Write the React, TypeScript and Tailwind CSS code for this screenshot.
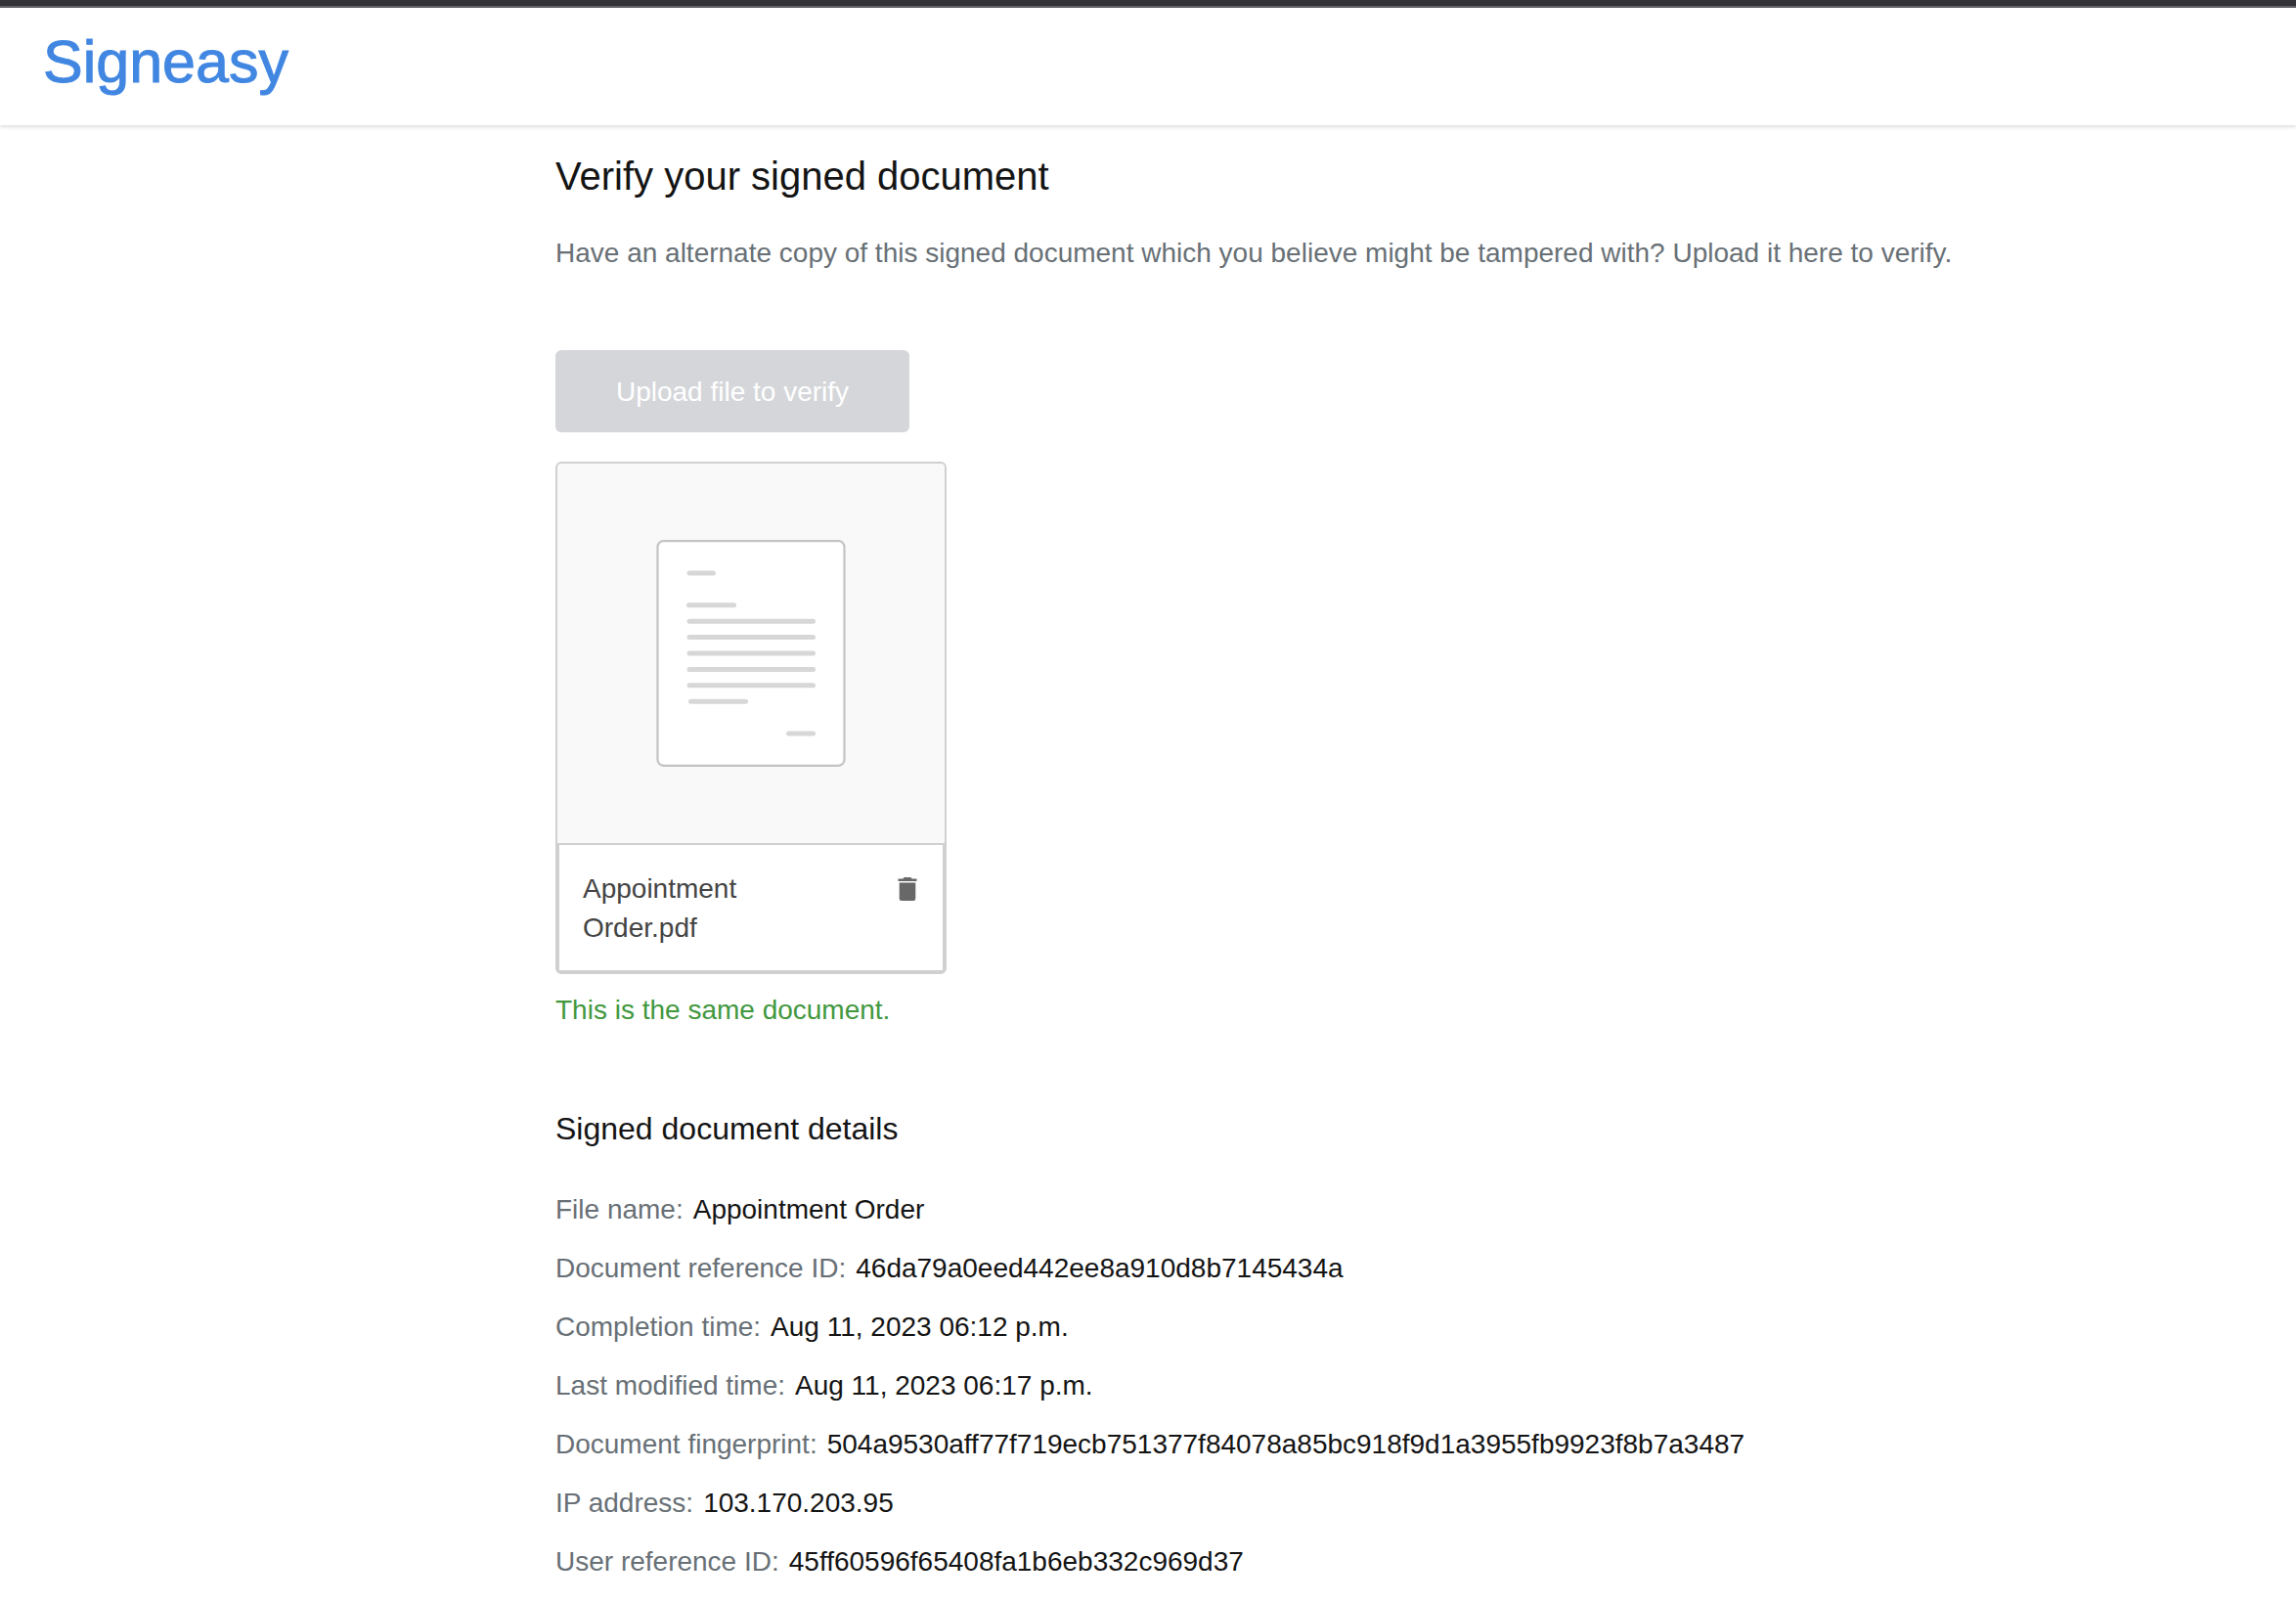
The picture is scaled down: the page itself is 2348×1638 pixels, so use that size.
import { useState } from "react";

const details = [
    { label: "File name:", value: "Appointment Order" },
    { label: "Document reference ID:", value: "46da79a0eed442ee8a910d8b7145434a" },
    { label: "Completion time:", value: "Aug 11, 2023 06:12 p.m." },
    { label: "Last modified time:", value: "Aug 11, 2023 06:17 p.m." },
    { label: "Document fingerprint:", value: "504a9530aff77f719ecb751377f84078a85bc918f9d1a3955fb9923f8b7a3487" },
    { label: "IP address:", value: "103.170.203.95" },
    { label: "User reference ID:", value: "45ff60596f65408fa1b6eb332c969d37" },
];

const DocumentPreview = () => (
    <svg width="194" height="232" viewBox="0 0 194 232" fill="none" aria-hidden="true">
        <rect x="1.5" y="1.2" width="191" height="229.6" rx="6" fill="#fff" stroke="#c3c3c3" strokeWidth="2.2" />
        <g stroke="#d7d7d7" strokeWidth="5" strokeLinecap="round">
            <path d="M34 34h24.5" />
            <path d="M33.5 66.8h46" />
            <path d="M34 83.2h126.5" />
            <path d="M34 99.6h126.5" />
            <path d="M34 116h126.5" />
            <path d="M34 132.4h126.5" />
            <path d="M34 148.8h126.5" />
            <path d="M35.5 165.2h56" />
            <path d="M135.5 198h25" />
        </g>
    </svg>
);

const TrashIcon = () => (
    <svg width="20" height="26" viewBox="0 0 20 26" fill="#686868" aria-hidden="true">
        <path d="M.5 2.4h5L6.6 1h6.8l1.1 1.4h5v2.5H.5z" />
        <path d="M1.7 6.5h16.6v16a2.5 2.5 0 0 1-2.5 2.5H4.2a2.5 2.5 0 0 1-2.5-2.5z" />
    </svg>
);

const App = () => {
    const [fileName, setFileName] = useState("Appointment Order.pdf");

    return (
        <div className="min-h-screen bg-white font-['Liberation_Sans',Arial,sans-serif] text-[28px] leading-10 text-[#141414]">
            <div className="h-2 border-b-2 border-[#636267] bg-[#343438]" />
            <header className="h-30 bg-white px-11 pt-6 shadow-[0_1px_5px_rgba(0,0,0,0.18)]">
                <a href="#" className="block w-fit text-[61px] leading-[62px] text-[#4187e2] [-webkit-text-stroke:1px_#4187e2]">
                    Signeasy
                </a>
            </header>

            <main className="pt-7 pr-8 pb-3 pl-[568px]">
                <h1 className="text-[40px] leading-12">Verify your signed document</h1>
                <p className="mt-[35px] text-[#687076]">
                    Have an alternate copy of this signed document which you believe might be tampered with? Upload it here to verify.
                </p>

                <button
                    type="button"
                    disabled={fileName !== ""}
                    className="mt-[79px] block h-21 w-[362px] rounded-md bg-[#4187e2] pt-0.5 text-white disabled:bg-[#d5d6da]"
                >
                    Upload file to verify
                </button>

                {fileName && (
                    <>
                        <div className="mt-[30px] w-[400px] rounded-md border-2 border-[#d0d0d0] bg-[#f9f9f9]">
                            <div className="flex h-97 items-center justify-center">
                                <DocumentPreview />
                            </div>
                            <div className="flex h-33 items-start justify-between border-2 border-[#d0d0d0] bg-white px-6 pt-[25px]">
                                <span className="w-50 text-[#444]">{fileName}</span>
                                <button type="button" aria-label="Remove file" className="mt-[7px] mr-0.5" onClick={() => setFileName("")}>
                                    <TrashIcon />
                                </button>
                            </div>
                        </div>
                        <p className="mt-[17px] text-[#43983f]">This is the same document.</p>
                    </>
                )}

                <h2 className="mt-[81px] text-[32px]">Signed document details</h2>
                <dl className="mt-[33px] leading-[60px]">
                    {details.map((item) => (
                        <div key={item.label} className="flex gap-2.5">
                            <dt className="text-[#687076]">{item.label}</dt>
                            <dd>{item.value}</dd>
                        </div>
                    ))}
                </dl>
            </main>
        </div>
    );
};

export default App;
